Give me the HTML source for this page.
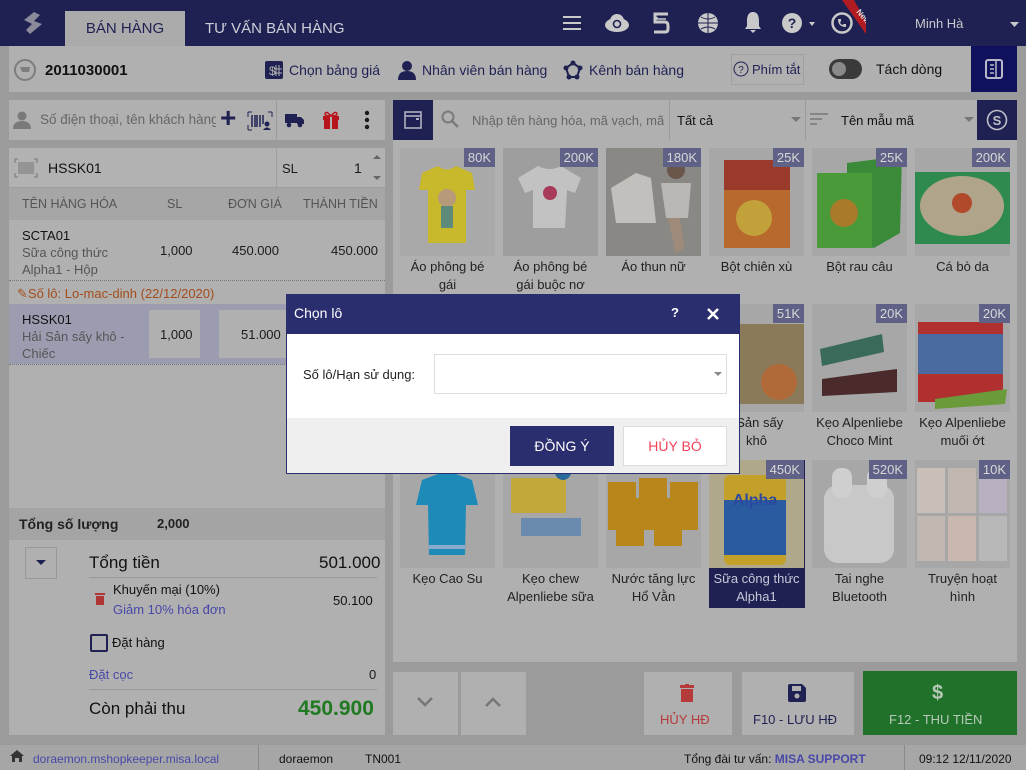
<!DOCTYPE html>
<html><head><meta charset="utf-8"><style>
*{box-sizing:border-box;margin:0;padding:0}
body{width:1026px;height:770px;overflow:hidden;background:#9b9b9b;font-family:"Liberation Sans","DejaVu Sans",sans-serif;position:relative;color:#1a1a1a}
.a{position:absolute}
.t{position:absolute;white-space:nowrap}
.hdr{left:0;top:0;width:1026px;height:46px;background:#1f2153}
.tab{left:65px;top:11px;width:120px;height:35px;background:#ababab;color:#1f2153;font-size:15px;text-align:center;line-height:35px}
.tile{position:absolute;width:95px;height:108px;background:#a7a7a7}
.price{position:absolute;right:0;top:0;background:#5f6186;color:#d8d8d8;font-size:13px;padding:2px 4px}
.lbl{position:absolute;width:103px;text-align:center;font-size:13px;line-height:18px;color:#222}
.ic{fill:#c9c9c9}
</style></head><body>
<div class="a hdr"></div>
<svg class="a" style="left:22px;top:12px" width="22" height="24" viewBox="0 0 22 24"><path d="M12 0 L2 8 L10 12 L4 18 L8 22 L20 12 L12 9 L18 3Z" fill="#8a8a9a"/></svg>
<div class="a tab">BÁN HÀNG</div>
<div class="t" style="left:205px;top:20px;color:#cfcfd8;font-size:15px">TƯ VẤN BÁN HÀNG</div>
<svg class="a" style="left:562px;top:14px" width="20" height="18"><rect x="1" y="2" width="18" height="2" fill="#c9c9c9"/><rect x="1" y="8" width="18" height="2" fill="#c9c9c9"/><rect x="1" y="14" width="18" height="2" fill="#c9c9c9"/></svg>
<svg class="a" style="left:604px;top:13px" width="26" height="20"><ellipse cx="13" cy="12" rx="12" ry="7" class="ic"/><circle cx="13" cy="8" r="7" class="ic"/><circle cx="13" cy="11" r="3.5" fill="none" stroke="#1f2153" stroke-width="1.6"/></svg>
<svg class="a" style="left:651px;top:12px" width="20" height="22"><path d="M17 2H4V10H14Q17 10 17 14V17Q17 20 14 20H3" fill="none" stroke="#c9c9c9" stroke-width="3"/><path d="M6 5V7H15" fill="none" stroke="#c9c9c9" stroke-width="1.5"/></svg>
<svg class="a" style="left:697px;top:12px" width="22" height="22"><circle cx="11" cy="11" r="10" class="ic"/><path d="M1 11H21M11 1V21M4 5Q11 9 18 5M4 17Q11 13 18 17" stroke="#1f2153" stroke-width="1" fill="none"/></svg>
<svg class="a" style="left:743px;top:11px" width="20" height="22"><path d="M10 1C5 1 4 6 4 10V15L2 18H18L16 15V10C16 6 15 1 10 1Z M7 19H13L10 22Z" class="ic"/></svg>
<svg class="a" style="left:781px;top:12px" width="36" height="22"><circle cx="11" cy="11" r="10" class="ic"/><text x="11" y="16" font-size="14" font-weight="bold" text-anchor="middle" fill="#1f2153" font-family="Liberation Sans">?</text><path d="M28 10L34 10L31 14Z" class="ic"/></svg>
<svg class="a" style="left:831px;top:12px" width="24" height="24"><circle cx="11" cy="11" r="9.5" fill="none" stroke="#c9c9c9" stroke-width="2.5"/><path d="M7 7Q7 15 15 15L15 12L13 12L11 13L9 11L10 9L10 7Z" class="ic"/></svg>
<svg class="a" style="left:836px;top:0" width="30" height="34"><path d="M6 0H18L30 22V34Z" fill="#b01c22"/><text x="20" y="12" font-size="8" fill="#ddd" font-weight="bold" transform="rotate(50 20 12)" font-family="Liberation Sans">New</text></svg>
<div class="t" style="left:915px;top:16px;color:#c9c9c9;font-size:13px">Minh Hà</div>
<svg class="a" style="left:1010px;top:22px" width="10" height="6"><path d="M0 0H9L4.5 5Z" fill="#c9c9c9"/></svg>

<div class="a" style="left:9px;top:46px;width:962px;height:46px;background:#b0b0b0"></div>
<svg class="a" style="left:14px;top:59px" width="22" height="22"><circle cx="11" cy="11" r="10" fill="none" stroke="#7d7d7d" stroke-width="2"/><path d="M6 8H16L15 13H8Z" fill="#7d7d7d"/></svg>
<div class="t" style="left:45px;top:62px;font-size:15px;font-weight:bold;color:#111">2011030001</div>
<svg class="a" style="left:265px;top:61px" width="18" height="18"><rect width="18" height="18" rx="2" fill="#1f2153"/><text x="4" y="14" font-size="12" fill="#b0b0b0" font-family="Liberation Sans">$</text><path d="M11 4V15M14 4V15M9 8H17M9 12H17" stroke="#b0b0b0"/></svg>
<div class="t" style="left:289px;top:62px;font-size:14px;color:#1f2153">Chọn bảng giá</div>
<svg class="a" style="left:398px;top:60px" width="18" height="20"><circle cx="9" cy="6" r="5" fill="#1f2153"/><path d="M0 20Q0 11 9 11Q18 11 18 20Z" fill="#1f2153"/></svg>
<div class="t" style="left:422px;top:62px;font-size:14px;color:#1f2153">Nhân viên bán hàng</div>
<svg class="a" style="left:563px;top:60px" width="20" height="20"><path d="M10 3L17 8L14 17H6L3 8Z" fill="none" stroke="#1f2153" stroke-width="2"/><circle cx="10" cy="3" r="2.5" fill="#1f2153"/><circle cx="17" cy="8" r="2.5" fill="#1f2153"/><circle cx="3" cy="8" r="2.5" fill="#1f2153"/><circle cx="14" cy="17" r="2.5" fill="#1f2153"/><circle cx="6" cy="17" r="2.5" fill="#1f2153"/></svg>
<div class="t" style="left:589px;top:62px;font-size:14px;color:#1f2153">Kênh bán hàng</div>
<div class="a" style="left:731px;top:54px;width:73px;height:31px;border:1px solid #a0a0a0"></div>
<svg class="a" style="left:733px;top:61px" width="16" height="16"><circle cx="8" cy="8" r="7" fill="#b0b0b0" stroke="#1f2153"/><text x="8" y="12" font-size="10" text-anchor="middle" fill="#1f2153" font-family="Liberation Sans">?</text></svg>
<div class="t" style="left:752px;top:62px;font-size:13px;color:#1f2153">Phím tắt</div>
<div class="a" style="left:829px;top:59px;width:33px;height:20px;border-radius:10px;background:#3a3a3a"></div>
<div class="a" style="left:832px;top:62px;width:14px;height:14px;border-radius:7px;background:#8a8a8a"></div>
<div class="t" style="left:876px;top:61px;font-size:14px;color:#111">Tách dòng</div>
<div class="a" style="left:971px;top:46px;width:46px;height:46px;background:#0f115c"></div>
<svg class="a" style="left:985px;top:59px" width="18" height="20"><rect x="1" y="1" width="16" height="18" rx="2" fill="none" stroke="#b8b8c8" stroke-width="2"/><path d="M11 1V19M5 6H9M5 10H9M5 14H9" stroke="#b8b8c8" stroke-width="1.5"/></svg>

<div class="a" style="left:9px;top:100px;width:376px;height:40px;background:#b0b0b0"></div>
<svg class="a" style="left:13px;top:111px" width="18" height="18"><circle cx="9" cy="5" r="4.5" fill="#7a7a7a"/><path d="M0 18Q0 10 9 10Q18 10 18 18Z" fill="#7a7a7a"/></svg>
<div class="t" style="left:40px;top:112px;font-size:13.5px;color:#666;width:176px;overflow:hidden">Số điện thoại, tên khách hàng</div>
<div class="t" style="left:220px;top:102px;font-size:28px;color:#1f2153;font-weight:bold">+</div>
<svg class="a" style="left:247px;top:111px" width="26" height="20"><path d="M1 1V6M1 1H5M1 19V14M1 19H5M25 1V6M25 1H21" stroke="#1f2153" fill="none"/><path d="M5 4V16M8 4V16M10 4V16M13 4V16M16 4V13" stroke="#1f2153" stroke-width="1.5"/><circle cx="20" cy="13" r="2.5" fill="#1f2153"/><path d="M16 19Q20 14 24 19Z" fill="#1f2153"/></svg>
<div class="a" style="left:276px;top:100px;width:1px;height:40px;background:#9a9a9a"></div>
<svg class="a" style="left:285px;top:113px" width="20" height="15"><rect x="0" y="1" width="12" height="9" fill="#1f2153"/><path d="M12 4H16L19 7V11H12Z" fill="#1f2153"/><circle cx="4" cy="12" r="2.3" fill="#1f2153"/><circle cx="15" cy="12" r="2.3" fill="#1f2153"/></svg>
<svg class="a" style="left:322px;top:110px" width="18" height="19"><rect x="1" y="6" width="16" height="4" fill="#b8141d"/><rect x="2" y="10" width="14" height="9" fill="#b8141d"/><rect x="8" y="6" width="2" height="13" fill="#b0b0b0"/><path d="M9 6Q4 0 3 4Q3 6 9 6Q15 6 15 4Q14 0 9 6" fill="none" stroke="#b8141d" stroke-width="1.5"/></svg>
<svg class="a" style="left:364px;top:110px" width="6" height="20"><circle cx="3" cy="3" r="2.2" fill="#1a1a1a"/><circle cx="3" cy="10" r="2.2" fill="#1a1a1a"/><circle cx="3" cy="17" r="2.2" fill="#1a1a1a"/></svg>

<div class="a" style="left:9px;top:148px;width:376px;height:360px;background:#b0b0b0"></div>
<div class="a" style="left:9px;top:148px;width:376px;height:40px;background:#b2b2b2;border-bottom:1px solid #9e9e9e"></div>
<svg class="a" style="left:14px;top:158px" width="24" height="20"><path d="M1 1V5M1 1H4M1 19V15M1 19H4M23 1V5M23 1H20M23 19V15M23 19H20" stroke="#777" fill="none"/><path d="M5 4V16M7 4V16M9 4V16M11 4V16M13 4V16M15 4V16M17 4V16M19 4V16" stroke="#777"/></svg>
<div class="t" style="left:48px;top:160px;font-size:14px;color:#111">HSSK01</div>
<div class="a" style="left:276px;top:148px;width:1px;height:40px;background:#9e9e9e"></div>
<div class="t" style="left:282px;top:161px;font-size:13px">SL</div>
<div class="t" style="left:354px;top:160px;font-size:14px">1</div>
<svg class="a" style="left:372px;top:154px" width="10" height="28"><path d="M1 5L5 1L9 5Z M1 22L5 26L9 22Z" fill="#666"/></svg>
<div class="a" style="left:9px;top:188px;width:376px;height:32px;background:#a6a6a6"></div>
<div class="t" style="left:22px;top:197px;font-size:12.5px;color:#555">TÊN HÀNG HÓA</div>
<div class="t" style="left:167px;top:197px;font-size:12.5px;color:#555">SL</div>
<div class="t" style="left:228px;top:197px;font-size:12.5px;color:#555">ĐƠN GIÁ</div>
<div class="t" style="left:303px;top:197px;font-size:12.5px;color:#555">THÀNH TIỀN</div>
<div class="t" style="left:22px;top:227px;font-size:13px;line-height:17px;color:#555"><span style="color:#111">SCTA01</span><br>Sữa công thức<br>Alpha1 - Hộp</div>
<div class="t" style="left:160px;top:243px;font-size:13px">1,000</div>
<div class="t" style="left:232px;top:243px;font-size:13px">450.000</div>
<div class="t" style="left:331px;top:243px;font-size:13px">450.000</div>
<div class="a" style="left:9px;top:280px;width:376px;border-top:1px dotted #777"></div>
<div class="t" style="left:17px;top:286px;font-size:13px;color:#a44d1c">✎Số lô: Lo-mac-dinh (22/12/2020)</div>
<div class="a" style="left:9px;top:304px;width:376px;height:60px;background:#9c9cb0"></div>
<div class="a" style="left:9px;top:364px;width:376px;border-top:1px dotted #777"></div>
<div class="t" style="left:22px;top:311px;font-size:13px;line-height:17px;color:#555"><span style="color:#111">HSSK01</span><br>Hải Sản sấy khô -<br>Chiếc</div>
<div class="a" style="left:149px;top:310px;width:51px;height:48px;background:#b0b0b0"></div>
<div class="t" style="left:160px;top:327px;font-size:13px">1,000</div>
<div class="a" style="left:219px;top:310px;width:68px;height:48px;background:#b0b0b0"></div>
<div class="t" style="left:241px;top:327px;font-size:13px">51.000</div>

<div class="a" style="left:9px;top:508px;width:376px;height:32px;background:#a4a4a4"></div>
<div class="t" style="left:19px;top:516px;font-size:14px;font-weight:bold;color:#222">Tổng số lượng</div>
<div class="t" style="left:157px;top:516px;font-size:13px;font-weight:bold;color:#222">2,000</div>
<div class="a" style="left:9px;top:540px;width:376px;height:195px;background:#b0b0b0"></div>
<div class="a" style="left:25px;top:547px;width:32px;height:32px;border:1px solid #999"></div>
<svg class="a" style="left:36px;top:560px" width="10" height="6"><path d="M0 0H10L5 5Z" fill="#1f2153"/></svg>
<div class="t" style="left:89px;top:553px;font-size:17px;color:#111">Tổng tiền</div>
<div class="t" style="left:319px;top:553px;font-size:17px;color:#111">501.000</div>
<div class="a" style="left:89px;top:577px;width:288px;border-top:1px solid #999"></div>
<svg class="a" style="left:95px;top:592px" width="10" height="13"><rect x="0" y="1" width="10" height="2" fill="#b03636"/><rect x="1" y="4" width="8" height="9" fill="#b03636"/></svg>
<div class="t" style="left:113px;top:582px;font-size:13px;color:#111">Khuyến mại (10%)</div>
<div class="t" style="left:113px;top:602px;font-size:13px;color:#4848a8">Giảm 10% hóa đơn</div>
<div class="t" style="left:333px;top:593px;font-size:13px;color:#111">50.100</div>
<div class="a" style="left:90px;top:634px;width:18px;height:18px;border:2px solid #1f2153;border-radius:2px"></div>
<div class="t" style="left:112px;top:635px;font-size:13px;color:#111">Đặt hàng</div>
<div class="t" style="left:89px;top:667px;font-size:13px;color:#4848a8">Đặt cọc</div>
<div class="t" style="left:369px;top:667px;font-size:13px">0</div>
<div class="a" style="left:89px;top:689px;width:288px;border-top:1px solid #999"></div>
<div class="t" style="left:89px;top:699px;font-size:17px;color:#111">Còn phải thu</div>
<div class="t" style="left:298px;top:697px;font-size:21px;font-weight:bold;color:#1f7a22">450.900</div>

<div class="a" style="left:393px;top:100px;width:624px;height:40px;background:#b0b0b0"></div>
<div class="a" style="left:393px;top:100px;width:40px;height:40px;background:#1f2153"></div>
<svg class="a" style="left:404px;top:111px" width="18" height="18"><rect x="1" y="1" width="16" height="16" fill="none" stroke="#b0b0c0" stroke-width="1.6"/><path d="M1 5H17" stroke="#b0b0c0" stroke-width="1.6"/><rect x="12" y="7" width="3" height="2" fill="#b0b0c0"/></svg>
<svg class="a" style="left:441px;top:110px" width="18" height="18"><circle cx="7" cy="7" r="5.5" fill="none" stroke="#7a7a7a" stroke-width="2"/><path d="M11 11L17 17" stroke="#7a7a7a" stroke-width="2.5"/></svg>
<div class="t" style="left:472px;top:113px;font-size:13px;color:#666;width:196px;overflow:hidden">Nhập tên hàng hóa, mã vạch, mã</div>
<div class="a" style="left:669px;top:100px;width:1px;height:40px;background:#9a9a9a"></div>
<div class="t" style="left:677px;top:113px;font-size:13px;color:#111">Tất cả</div>
<svg class="a" style="left:791px;top:117px" width="10" height="6"><path d="M0 0H10L5 5Z" fill="#777"/></svg>
<div class="a" style="left:805px;top:100px;width:1px;height:40px;background:#9a9a9a"></div>
<svg class="a" style="left:810px;top:113px" width="18" height="14"><path d="M0 1H18M0 6H12M0 11H7" stroke="#777" stroke-width="1.5"/></svg>
<div class="t" style="left:841px;top:113px;font-size:13px;color:#111">Tên mẫu mã</div>
<svg class="a" style="left:964px;top:117px" width="10" height="6"><path d="M0 0H10L5 5Z" fill="#777"/></svg>
<div class="a" style="left:977px;top:100px;width:40px;height:40px;background:#1f2153"></div>
<svg class="a" style="left:986px;top:109px" width="22" height="22"><circle cx="11" cy="11" r="9.5" fill="none" stroke="#c0c0c8" stroke-width="1.6"/><text x="11" y="16" font-size="13" text-anchor="middle" fill="#c0c0c8" font-family="Liberation Sans" font-weight="bold">S</text></svg>
<div class="a" style="left:393px;top:140px;width:624px;height:522px;background:#b0b0b0"></div>

<div class="tile" style="left:400px;top:148px;background:#a9a9a9"><svg width="95" height="108"><path d="M22 25L38 18Q47 25 56 18L72 25L75 42L66 42L66 95L28 95L28 42L19 42Z" fill="#c8b82b"/><circle cx="47" cy="50" r="9" fill="#b79a7a"/><rect x="41" y="58" width="12" height="22" fill="#5e8a7c"/></svg><span class="price">80K</span></div>
<div class="tile" style="left:503px;top:148px;background:#9e9e9e"><svg width="95" height="108"><path d="M15 30L35 18Q47 24 58 18L78 30L72 45L64 42L62 80L30 80L30 42L22 45Z" fill="#c2c2c2"/><circle cx="47" cy="45" r="7" fill="#a83a5a"/></svg><span class="price">200K</span></div>
<div class="tile" style="left:606px;top:148px;background:#8a8884"><svg width="95" height="108"><path d="M5 40L30 25L45 30L50 75L10 75Z" fill="#c2c0bc"/><circle cx="70" cy="22" r="9" fill="#6a564a"/><path d="M55 35L85 35L82 70L60 70Z" fill="#bab8b4"/><path d="M62 70L70 105L78 100L74 70Z" fill="#a08a7a"/></svg><span class="price">180K</span></div>
<div class="tile" style="left:709px;top:148px"><svg width="95" height="108"><rect x="15" y="12" width="66" height="88" fill="#b8692e"/><rect x="15" y="12" width="66" height="30" fill="#9a3a2a"/><circle cx="45" cy="70" r="18" fill="#c2a03a"/></svg><span class="price">25K</span></div>
<div class="tile" style="left:812px;top:148px"><svg width="95" height="108"><path d="M35 15L90 8L88 85L62 100L35 95Z" fill="#3a8a3a"/><rect x="5" y="25" width="55" height="75" fill="#4a9a3a"/><circle cx="32" cy="65" r="14" fill="#a87a2a"/></svg><span class="price">25K</span></div>
<div class="tile" style="left:915px;top:148px"><svg width="95" height="108"><rect x="0" y="24" width="95" height="72" fill="#2e8a4e"/><ellipse cx="47" cy="58" rx="42" ry="30" fill="#b0a48a"/><circle cx="47" cy="55" r="10" fill="#b04a2a"/></svg><span class="price">200K</span></div>
<div class="lbl" style="left:396px;top:258px">Áo phông bé<br>gái</div>
<div class="lbl" style="left:499px;top:258px">Áo phông bé<br>gái buộc nơ</div>
<div class="lbl" style="left:602px;top:258px">Áo thun nữ</div>
<div class="lbl" style="left:705px;top:258px">Bột chiên xù</div>
<div class="lbl" style="left:808px;top:258px">Bột rau câu</div>
<div class="lbl" style="left:911px;top:258px">Cá bò da</div>
<div class="tile" style="left:709px;top:304px"><svg width="95" height="108"><rect x="0" y="20" width="95" height="80" fill="#8a7a5a"/><circle cx="70" cy="78" r="18" fill="#b06a3a"/></svg><span class="price">51K</span></div>
<div class="tile" style="left:812px;top:304px"><svg width="95" height="108"><path d="M8 45L70 30L72 48L10 62Z" fill="#3a6a5a"/><path d="M10 75L85 65L85 88L10 92Z" fill="#4a2a2a"/></svg><span class="price">20K</span></div>
<div class="tile" style="left:915px;top:304px"><svg width="95" height="108"><rect x="3" y="18" width="85" height="80" fill="#b03030"/><path d="M3 30H88V70H3Z" fill="#4a6aa0"/><path d="M20 95L92 85L90 100L20 105Z" fill="#6a9a3a"/></svg><span class="price">20K</span></div>
<div class="lbl" style="left:705px;top:414px">i Sản sấy<br>khô</div>
<div class="lbl" style="left:808px;top:414px">Kẹo Alpenliebe<br>Choco Mint</div>
<div class="lbl" style="left:911px;top:414px">Kẹo Alpenliebe<br>muối ớt</div>
<div class="tile" style="left:400px;top:460px"><svg width="95" height="108"><path d="M22 20L38 14L56 14L72 20L78 45L66 45L65 95L29 95L28 45L16 45Z" fill="#1e8ab8"/><rect x="29" y="85" width="36" height="4" fill="#8ac"/></svg></div>
<div class="tile" style="left:503px;top:460px"><svg width="95" height="108"><rect x="8" y="18" width="55" height="35" fill="#c2a83a"/><rect x="18" y="58" width="60" height="18" fill="#6a8ab0"/><circle cx="60" cy="12" r="8" fill="#2a6a9a"/></svg></div>
<div class="tile" style="left:606px;top:460px"><svg width="95" height="108"><g fill="#b8861a"><rect x="2" y="22" width="28" height="48"/><rect x="33" y="18" width="28" height="52"/><rect x="64" y="22" width="28" height="48"/><rect x="10" y="38" width="28" height="48"/><rect x="48" y="38" width="28" height="48"/></g></svg></div>
<div class="a" style="left:709px;top:460px;width:96px;height:148px;background:#1f2153"></div>
<div class="tile" style="left:709px;top:460px;background:#b0a88a"><svg width="95" height="108"><rect x="15" y="15" width="62" height="90" rx="6" fill="#c2a02a"/><rect x="15" y="40" width="62" height="55" fill="#2a5aa0"/><text x="46" y="45" font-size="16" text-anchor="middle" fill="#2a4aa0" font-family="Liberation Sans" font-weight="bold">Alpha</text></svg><span class="price">450K</span></div>
<div class="tile" style="left:812px;top:460px"><svg width="95" height="108"><rect x="12" y="25" width="70" height="78" rx="14" fill="#c8c8c8"/><rect x="20" y="8" width="20" height="30" rx="9" fill="#cfcfcf"/><rect x="55" y="8" width="20" height="30" rx="9" fill="#cfcfcf"/></svg><span class="price">520K</span></div>
<div class="tile" style="left:915px;top:460px"><svg width="95" height="108"><rect x="2" y="8" width="28" height="45" fill="#c8c0b8"/><rect x="33" y="8" width="28" height="45" fill="#c0b8b0"/><rect x="64" y="8" width="28" height="45" fill="#b8b0c0"/><rect x="2" y="56" width="28" height="45" fill="#c0b8b0"/><rect x="33" y="56" width="28" height="45" fill="#c8b8b0"/><rect x="64" y="56" width="28" height="45" fill="#b8b8b8"/></svg><span class="price">10K</span></div>
<div class="lbl" style="left:396px;top:570px">Kẹo Cao Su</div>
<div class="lbl" style="left:499px;top:570px">Kẹo chew<br>Alpenliebe sữa</div>
<div class="lbl" style="left:602px;top:570px">Nước tăng lực<br>Hổ Vằn</div>
<div class="lbl" style="left:705px;top:570px;color:#c8c8d8">Sữa công thức<br>Alpha1</div>
<div class="lbl" style="left:808px;top:570px">Tai nghe<br>Bluetooth</div>
<div class="lbl" style="left:911px;top:570px">Truyện hoạt<br>hình</div>

<div class="a" style="left:393px;top:672px;width:65px;height:63px;background:#b0b0b0"></div>
<svg class="a" style="left:417px;top:697px" width="16" height="10"><path d="M1 1L8 8L15 1" stroke="#777" stroke-width="2.5" fill="none"/></svg>
<div class="a" style="left:461px;top:672px;width:65px;height:63px;background:#b0b0b0"></div>
<svg class="a" style="left:485px;top:697px" width="16" height="10"><path d="M1 9L8 2L15 9" stroke="#777" stroke-width="2.5" fill="none"/></svg>
<div class="a" style="left:644px;top:672px;width:88px;height:63px;background:#b0b0b0"></div>
<svg class="a" style="left:680px;top:684px" width="14" height="18"><rect x="0" y="1" width="14" height="3" fill="#b53a3a"/><rect x="5" y="0" width="4" height="2" fill="#b53a3a"/><rect x="1" y="5" width="12" height="13" fill="#b53a3a"/></svg>
<div class="t" style="left:660px;top:712px;font-size:13px;color:#b53a3a">HỦY HĐ</div>
<div class="a" style="left:742px;top:672px;width:112px;height:63px;background:#b0b0b0"></div>
<svg class="a" style="left:788px;top:684px" width="18" height="18"><path d="M0 2Q0 0 2 0H14L18 4V16Q18 18 16 18H2Q0 18 0 16Z" fill="#1f2153"/><rect x="4" y="2" width="9" height="5" fill="#b0b0b0"/><circle cx="9" cy="12" r="2.5" fill="#b0b0b0"/></svg>
<div class="t" style="left:753px;top:712px;font-size:13px;color:#1f2153">F10 - LƯU HĐ</div>
<div class="a" style="left:863px;top:671px;width:154px;height:64px;background:#20722a"></div>
<div class="t" style="left:932px;top:682px;font-size:20px;color:#b8c8b8;font-weight:bold">$</div>
<div class="t" style="left:889px;top:712px;font-size:13px;color:#b8c8b8">F12 - THU TIỀN</div>

<div class="a" style="left:0;top:745px;width:1026px;height:25px;background:#a6a6a6"></div>
<svg class="a" style="left:10px;top:750px" width="14" height="12"><path d="M7 0L14 6H12V12H9V8H5V12H2V6H0Z" fill="#333"/></svg>
<div class="t" style="left:33px;top:752px;font-size:12px;color:#4848a8">doraemon.mshopkeeper.misa.local</div>
<div class="a" style="left:258px;top:745px;width:1px;height:25px;background:#8a8a8a"></div>
<div class="t" style="left:279px;top:752px;font-size:12px;color:#111">doraemon</div>
<div class="t" style="left:365px;top:752px;font-size:12px;color:#111">TN001</div>
<div class="t" style="left:684px;top:752px;font-size:12px;color:#111">Tổng đài tư vấn: <b style="color:#4848a8">MISA SUPPORT</b></div>
<div class="a" style="left:904px;top:745px;width:1px;height:25px;background:#8a8a8a"></div>
<div class="t" style="left:919px;top:752px;font-size:12px;color:#111">09:12 12/11/2020</div>

<div class="a" style="left:286px;top:294px;width:454px;height:180px;border:1px solid #2b2e6e;background:#fff"></div>
<div class="a" style="left:286px;top:294px;width:454px;height:40px;background:#2b2e6e"></div>
<div class="t" style="left:294px;top:305px;font-size:14px;color:#fff">Chọn lô</div>
<div class="t" style="left:671px;top:305px;font-size:13px;color:#fff;font-weight:bold">?</div>
<svg class="a" style="left:707px;top:308px" width="12" height="12"><path d="M1 1L11 11M11 1L1 11" stroke="#fff" stroke-width="2.5"/></svg>
<div class="t" style="left:303px;top:367px;font-size:13px;color:#222">Số lô/Hạn sử dụng:</div>
<div class="a" style="left:434px;top:354px;width:293px;height:40px;border:1px solid #ddd;background:#fff"></div>
<svg class="a" style="left:714px;top:372px" width="8" height="5"><path d="M0 0H8L4 4Z" fill="#888"/></svg>
<div class="a" style="left:287px;top:418px;width:452px;height:55px;background:#efefef"></div>
<div class="a" style="left:510px;top:426px;width:104px;height:40px;background:#2b2e6e;color:#fff;font-size:14px;text-align:center;line-height:40px">ĐỒNG Ý</div>
<div class="a" style="left:623px;top:426px;width:104px;height:40px;background:#fff;border:1px solid #ddd;color:#f0435a;font-size:14px;text-align:center;line-height:38px">HỦY BỎ</div>
</body></html>
